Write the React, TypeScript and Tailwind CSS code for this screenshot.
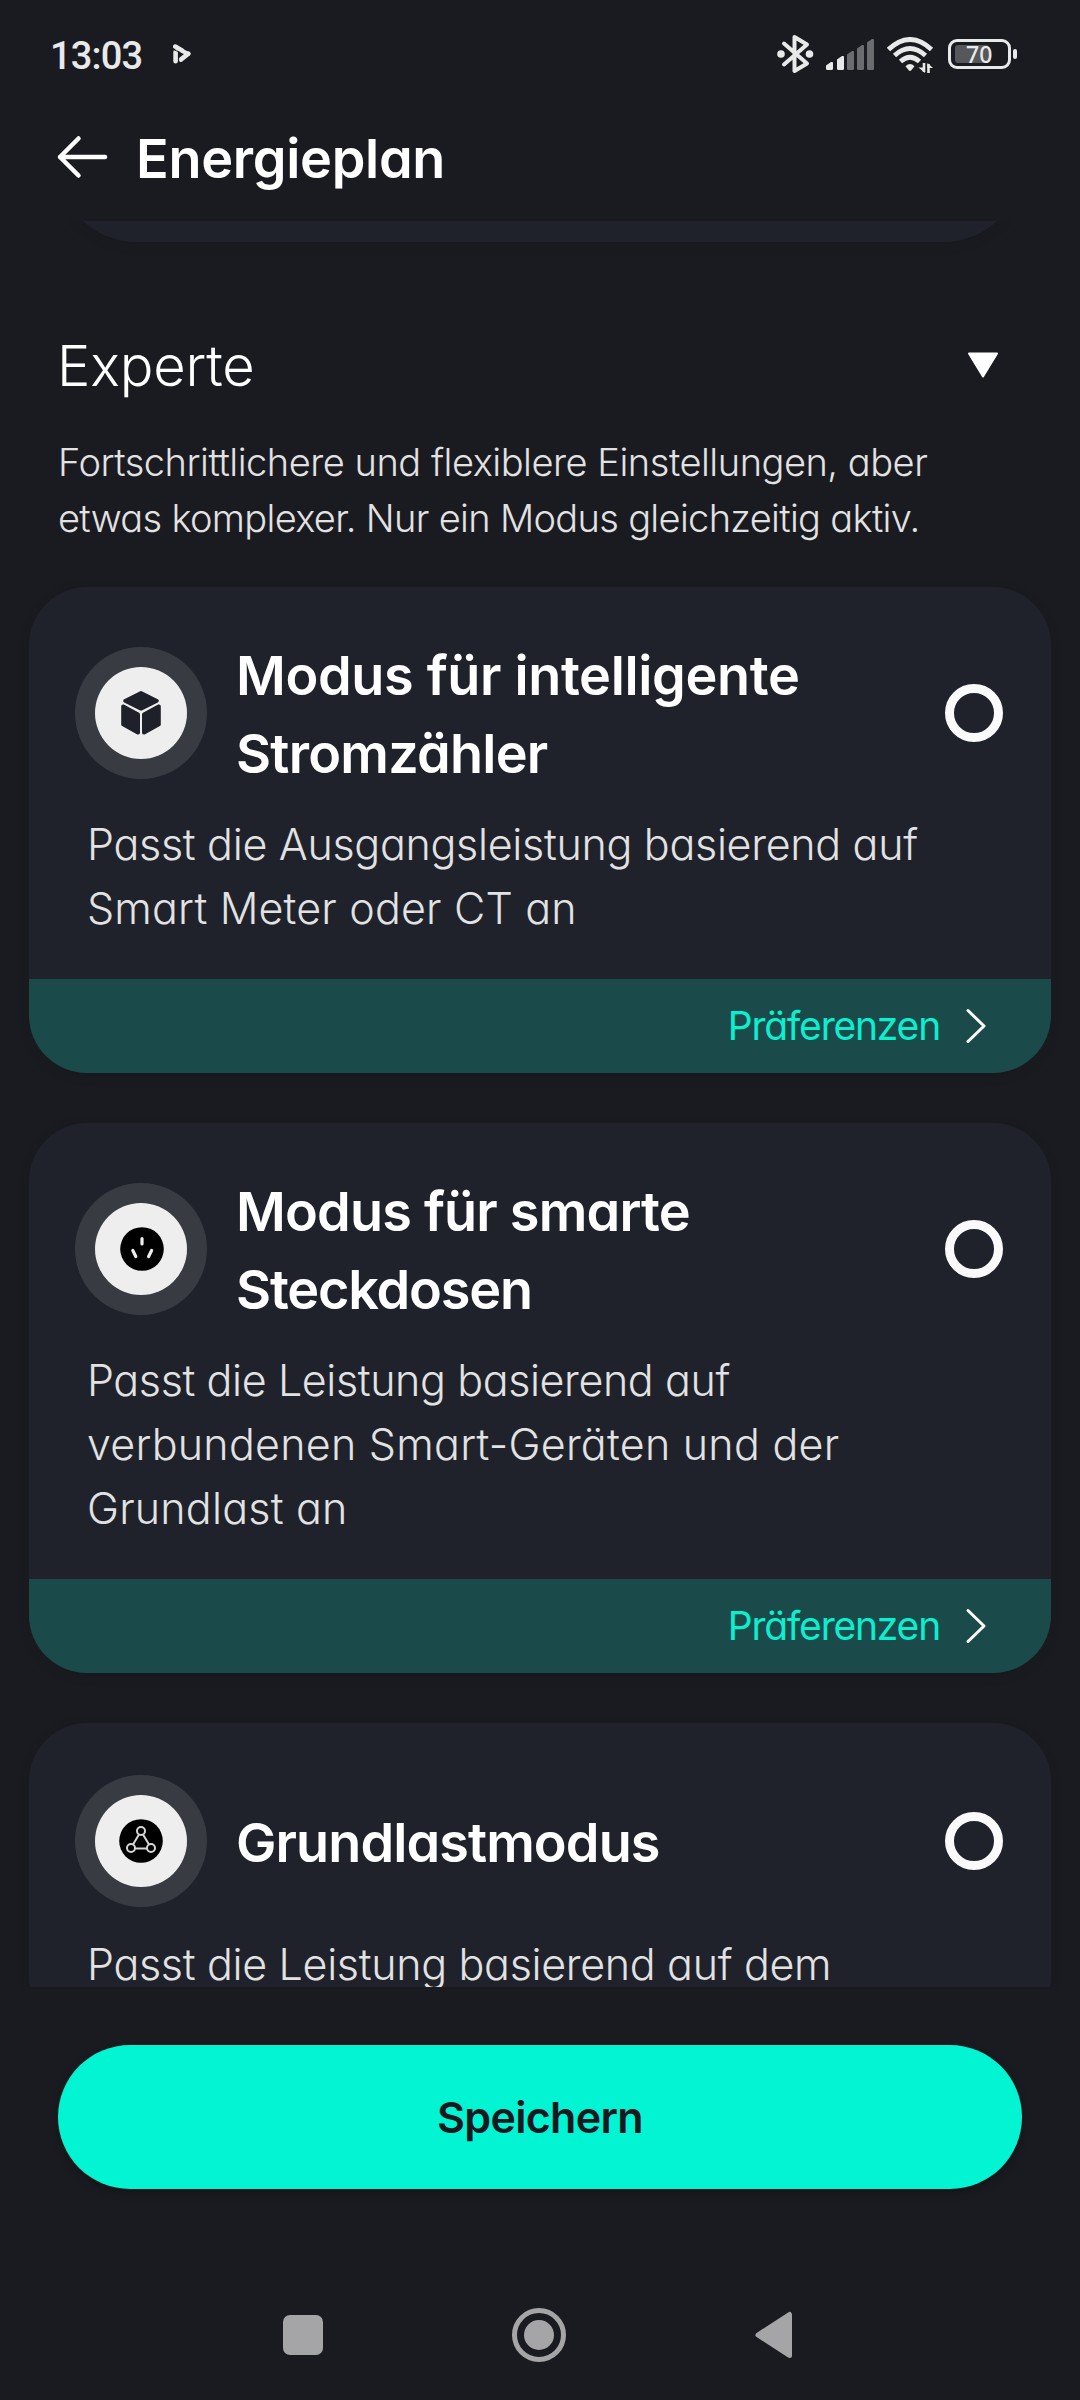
import type { ReactNode } from 'react';

const LIGHT = '#e8e9e9';

function StatusBar() {
  return (
    <div className="flex h-[108px] items-start pl-[50px]">
      <span className="mt-[34px] w-[123px] font-['Roboto'] text-[38px] leading-[44px] font-medium tracking-[-0.8px] text-[#e8e9e9]">
        13:03
      </span>
      <svg className="mt-[44px]" width="18" height="20" viewBox="0 0 18 20" fill="none">
        <path d="M2.2 2.6 9 6.6M2.6 8v9.3M15.3 9.6 7.8 15.6" stroke={LIGHT} strokeWidth="4.6" strokeLinecap="round" />
        <path d="M8 6.4 15.2 9.8" stroke={LIGHT} strokeWidth="4.2" strokeLinecap="round" />
        <path d="M1 5.8 7.6 8.6M5.6 12v7" stroke="#1a1b20" strokeWidth="0.9" />
      </svg>

      <svg className="mt-[34px] ml-[586px]" width="37" height="40" viewBox="0 0 37 40" fill="none">
        <path d="M7 9.5 30 29.5 17.5 37V3L30 10.5 7 30.5" stroke={LIGHT} strokeWidth="4" strokeLinejoin="round" strokeLinecap="round" />
        <circle cx="4" cy="20" r="3.8" fill={LIGHT} />
        <circle cx="32.5" cy="20" r="3.8" fill={LIGHT} />
      </svg>
      <svg className="mt-[38px] ml-[12px]" width="49" height="33" viewBox="0 0 49 33">
        <path d="M0 27.5 5 24h1.200q.8 0 .8.800v5.700q0 1.500-1.500 1.500h-4Q0 32 0 30.500z" fill={LIGHT} />
        <path d="M11 21.500 16 18h1.200q.8 0 .8.800V30.500q0 1.500-1.500 1.500h-4q-1.500 0-1.500-1.500z" fill={LIGHT} />
        <g fill="#6b6c6f">
          <path d="M21 16.500 26 13h1.200q.8 0 .8.800V30.500q0 1.500-1.500 1.500h-4q-1.500 0-1.500-1.500z" />
          <path d="M31 10.500 36 7h1.200q.8 0 .8.800V30.500q0 1.500-1.500 1.500h-4q-1.500 0-1.500-1.500z" />
          <path d="M41 4.500 46 1h1.200q.8 0 .8.800V30.500q0 1.500-1.500 1.500h-4q-1.500 0-1.500-1.500z" />
        </g>
      </svg>
      <svg className="mt-[37px] ml-[12px]" width="47" height="37" viewBox="0 0 47 37" fill="none">
        <path d="M1.500 12.500Q23 -7.500 44.500 12.500" stroke={LIGHT} strokeWidth="4.800" />
        <path d="M7.500 18.500Q23 4.500 38.500 18.500" stroke={LIGHT} strokeWidth="4.800" />
        <path d="M13.500 24.500Q23 16 32.500 24.500" stroke={LIGHT} strokeWidth="4.800" />
        <path d="M18.500 29.300Q23 24.600 27.500 29.300L24.300 33.200Q23 34.600 21.700 33.200z" fill={LIGHT} />
        <path d="M37 26v9M41.500 36v-9" stroke={LIGHT} strokeWidth="2.600" />
        <path d="M31.500 30.500H38V36zM40.500 26l5.500 5h-5.500z" fill={LIGHT} />
      </svg>
      <div className="mt-[39px] ml-[14px] flex items-center">
        <div className="relative flex h-[30px] w-[63px] items-center rounded-[9px] border-[3px] border-[#e8e9e9] pl-[4px]">
          <div className="h-[18px] w-[34px] rounded-[3px] bg-[#56575a]" />
          <span className="absolute left-[15px] font-['Noto_Sans'] text-[23px] leading-[24px] font-medium text-[#e8e9e9]">70</span>
        </div>
        <div className="ml-[2px] h-[10px] w-[4px] rounded-[2px] bg-[#e8e9e9]" />
      </div>
    </div>
  );
}

function CubeIcon() {
  return (
    <svg width="42" height="46" viewBox="0 0 42 46" fill="#1f212a" stroke="#1f212a" strokeWidth="3.600" strokeLinejoin="round">
      <path d="M21 2.800 37 10.800 21 18.800 5 10.800z" />
      <path d="M3 16.200 18.200 24.400V42.800L3 34.500z" />
      <path d="M39 16.200 23.800 24.400V42.800L39 34.500z" />
    </svg>
  );
}

function SocketIcon() {
  return (
    <svg className="translate-x-px" width="44" height="44" viewBox="0 0 44 44">
      <circle cx="22" cy="22" r="21.800" fill="#000" />
      <path d="M22 11.500v5.500M12.800 23.500l3 6M31.600 23.500l-3 6" stroke="#eee" strokeWidth="3.200" strokeLinecap="round" />
    </svg>
  );
}

function NodesIcon() {
  return (
    <svg width="44" height="44" viewBox="0 0 44 44" fill="none" stroke="#d6d6d6" strokeWidth="2">
      <circle cx="22" cy="22" r="21.800" fill="#000" stroke="none" />
      <path d="M20 15.500 14 25.500M24 15.500 30 25.500M16 29.500h12" />
      <circle cx="22" cy="12" r="4" />
      <circle cx="12" cy="29" r="4" />
      <circle cx="32" cy="29" r="4" />
    </svg>
  );
}

function ModeCard({ icon, title, children, footer = true, single = false }: { icon: ReactNode; title: ReactNode; children: ReactNode; footer?: boolean; single?: boolean }) {
  return (
    <section className="mx-[29px] mb-[50px] shrink-0 overflow-hidden rounded-[58px] bg-[#20222b] shadow-[0_3px_14px_rgba(0,0,0,0.07)]">
      <div className={single ? 'flex items-center pt-[52px] pr-[48px] pl-[46px]' : 'flex items-center pt-[48px] pr-[48px] pl-[46px]'}>
        <div className="flex size-[132px] shrink-0 items-center justify-center rounded-full bg-[#393b43]">
          <div className="flex size-[92px] items-center justify-center rounded-full bg-[#eeeeee]">{icon}</div>
        </div>
        <h2 className="mt-[2px] -mb-[2px] ml-[29px] flex-1 text-[54px] leading-[78px] font-semibold whitespace-nowrap text-white">{title}</h2>
        <span className="size-[58px] shrink-0 rounded-full border-[9px] border-[#fafafa]" />
      </div>
      <p className={single ? 'mt-[25px] pb-[39px] pl-[58px] text-[43px] leading-[64px] font-light whitespace-nowrap text-[#e2e2e3]' : 'mt-[21px] pb-[39px] pl-[58px] text-[43px] leading-[64px] font-light whitespace-nowrap text-[#e2e2e3]'}>
        {children}
      </p>
      {footer && (
        <div className="flex h-[94px] items-center justify-end bg-[#1a4b4a] pr-[64px]">
          <span className="text-[39px] tracking-[-1.200px] text-[#0beed0]">Präferenzen</span>
          <svg className="ml-[25px]" width="22" height="38" viewBox="0 0 22 38" fill="none" stroke="#fff" strokeWidth="3" strokeLinecap="round" strokeLinejoin="round">
            <path d="M3 3.500 19 19 3 34.500" />
          </svg>
        </div>
      )}
    </section>
  );
}

export default function App() {
  return (
    <div className="flex h-[2400px] w-[1080px] flex-col overflow-hidden bg-[#1a1b20] font-['Inter',sans-serif] [font-feature-settings:'cv11']">
      <StatusBar />
      <header className="flex h-[113px] shrink-0 items-center pb-[15px] pl-[56px]">
        <svg width="52" height="44" viewBox="0 0 52 44" fill="none" stroke="#fff" strokeWidth="4.500" strokeLinecap="round" strokeLinejoin="round">
          <path d="M49 22H4M22.500 3.500 4 22 22.500 40.500" />
        </svg>
        <h1 className="mt-[4px] ml-[28px] text-[54px] leading-[70px] font-semibold tracking-[-0.300px] text-white">Energieplan</h1>
      </header>

      <main className="flex h-[1766px] shrink-0 flex-col overflow-hidden">
        <div className="mx-[58px] flex h-[21px] shrink-0 flex-col justify-end">
          <div className="h-[200px] shrink-0 rounded-[78px] bg-[#20222b] shadow-[0_3px_14px_rgba(0,0,0,0.07)]" />
        </div>

        <div className="mt-[83px] flex h-[80px] shrink-0 items-center pr-[81px] pl-[57px]">
          <h2 className="mt-[2px] flex-1 text-[56px] leading-[80px] font-light tracking-[-0.200px] text-white">Experte</h2>
          <svg width="32" height="26" viewBox="0 0 32 26" fill="#fff" stroke="#fff" strokeWidth="2" strokeLinejoin="round">
            <path d="M2 1.500H30L16 24.500z" />
          </svg>
        </div>
        <p className="mt-[29px] shrink-0 pl-[58px] text-[38px] leading-[56px] font-light whitespace-nowrap text-[#e2e2e3]">
          <span className="block tracking-[-0.480px]">Fortschrittlichere und flexiblere Einstellungen, aber</span>
          <span className="block tracking-[-0.680px]">etwas komplexer. Nur ein Modus gleichzeitig aktiv.</span>
        </p>
        <div className="h-[41px] shrink-0" />

        <ModeCard
          icon={<CubeIcon />}
          title={
            <>
              <span className="block tracking-[-0.340px]">Modus für intelligente</span>
              <span className="block tracking-[-0.750px]">Stromzähler</span>
            </>
          }
        >
          <span className="block tracking-[-0.310px]">Passt die Ausgangsleistung basierend auf</span>
          <span className="block tracking-[0.170px]">Smart Meter oder CT an</span>
        </ModeCard>

        <ModeCard
          icon={<SocketIcon />}
          title={
            <>
              <span className="block tracking-[-0.800px]">Modus für smarte</span>
              <span className="block tracking-[-1.200px]">Steckdosen</span>
            </>
          }
        >
          <span className="block tracking-[-0.400px]">Passt die Leistung basierend auf</span>
          <span className="block tracking-[0.250px]">verbundenen Smart-Geräten und der</span>
          <span className="block tracking-[0.200px]">Grundlast an</span>
        </ModeCard>

        <ModeCard single footer={false} icon={<NodesIcon />} title={<span className="tracking-[-0.900px]">Grundlastmodus</span>}>
          <span className="block tracking-[-0.330px]">Passt die Leistung basierend auf dem</span>
        </ModeCard>
      </main>

      <div className="mt-[58px] shrink-0 px-[58px]">
        <button className="flex h-[144px] w-full items-center justify-center rounded-full bg-[#02f4d3] pt-px text-[43px] font-semibold tracking-[-0.700px] text-[#17191f] shadow-[0_4px_8px_rgba(0,0,0,0.25)]">
          Speichern
        </button>
      </div>

      <nav className="mt-[119px] flex h-[54px] items-center pl-[283px]">
        <span className="size-[40px] rounded-[7px] bg-[#a5a5a7]" />
        <span className="ml-[189px] flex size-[54px] items-center justify-center rounded-full border-[5px] border-[#a5a5a7]">
          <span className="size-[30px] rounded-full bg-[#a5a5a7]" />
        </span>
        <svg className="ml-[189px]" width="38" height="48" viewBox="0 0 38 48" fill="#a5a5a7" stroke="#a5a5a7" strokeWidth="5" strokeLinejoin="round">
          <path d="M3 24 34.500 3.500v41z" />
        </svg>
      </nav>
    </div>
  );
}
